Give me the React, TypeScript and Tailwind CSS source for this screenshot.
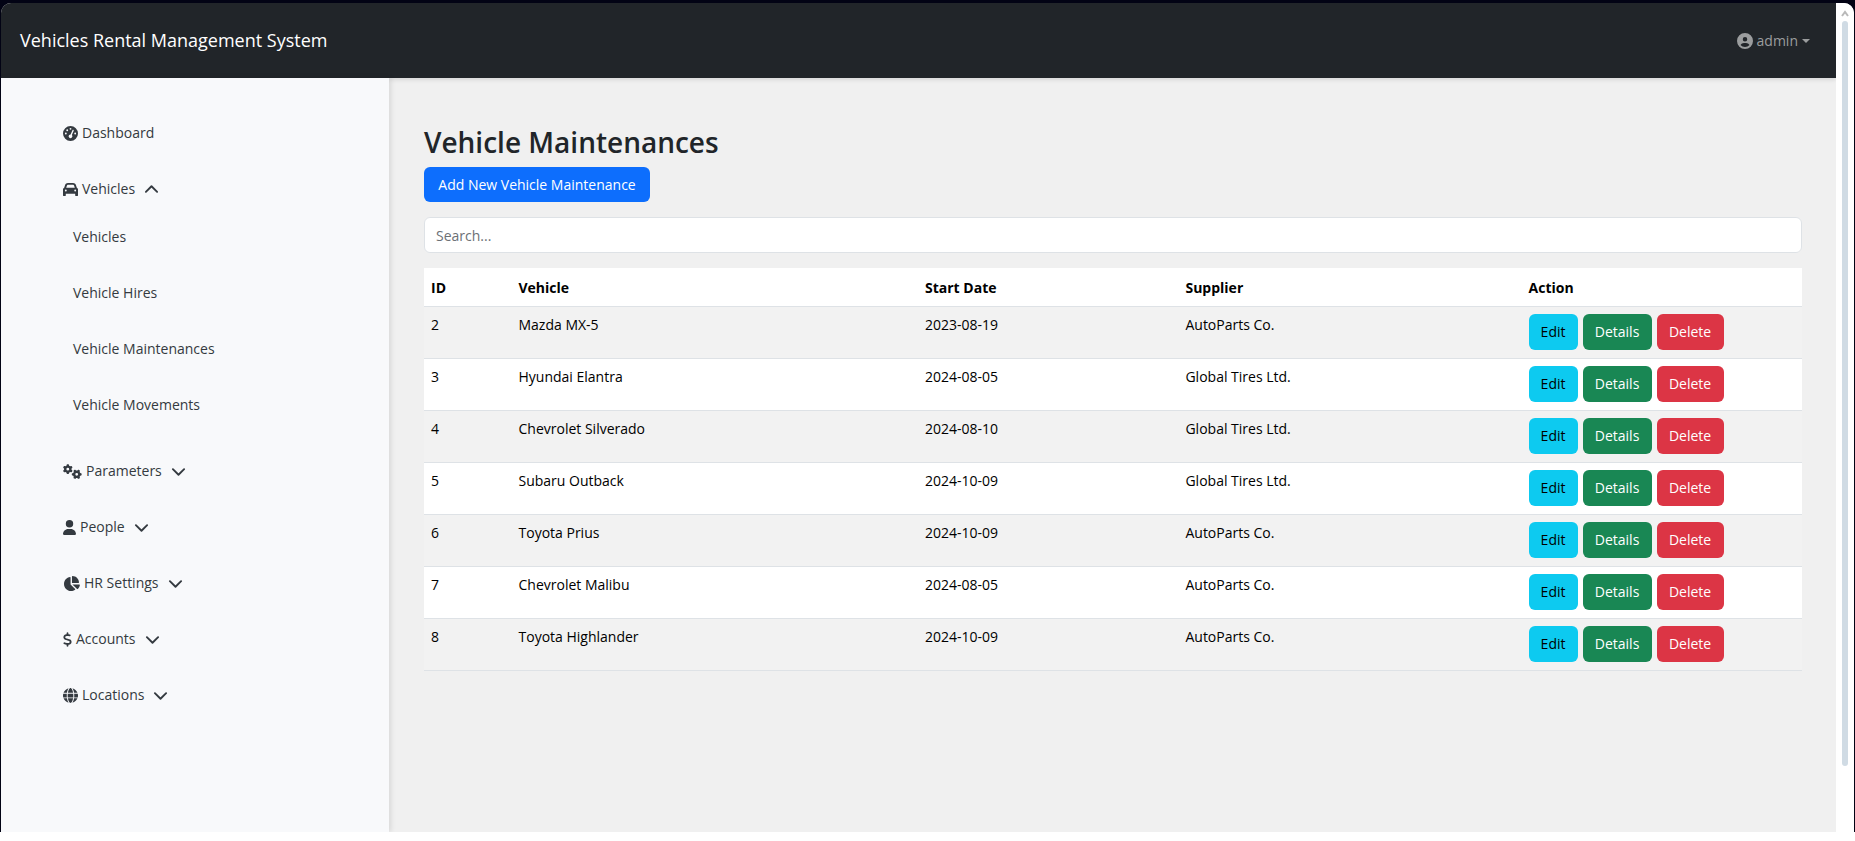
import { useState } from "react";
import type { ReactNode } from "react";
import {
  FaCar,
  FaChartPie,
  FaCircleUser,
  FaDollarSign,
  FaGaugeHigh,
  FaGears,
  FaGlobe,
  FaUser,
} from "react-icons/fa6";

type Maintenance = { id: number; vehicle: string; date: string; supplier: string };

const records: Maintenance[] = [
  { id: 2, vehicle: "Mazda MX-5", date: "2023-08-19", supplier: "AutoParts Co." },
  { id: 3, vehicle: "Hyundai Elantra", date: "2024-08-05", supplier: "Global Tires Ltd." },
  { id: 4, vehicle: "Chevrolet Silverado", date: "2024-08-10", supplier: "Global Tires Ltd." },
  { id: 5, vehicle: "Subaru Outback", date: "2024-10-09", supplier: "Global Tires Ltd." },
  { id: 6, vehicle: "Toyota Prius", date: "2024-10-09", supplier: "AutoParts Co." },
  { id: 7, vehicle: "Chevrolet Malibu", date: "2024-08-05", supplier: "AutoParts Co." },
  { id: 8, vehicle: "Toyota Highlander", date: "2024-10-09", supplier: "AutoParts Co." },
];

const vehicleLinks = ["Vehicles", "Vehicle Hires", "Vehicle Maintenances", "Vehicle Movements"];

function Chevron({ up = false }: { up?: boolean }) {
  return (
    <svg viewBox="0 0 16 16" className="ml-[5px] size-[15px] fill-none stroke-current stroke-2" aria-hidden="true">
      <path d={up ? "M2 10.5l6-6 6 6" : "M2 5.5l6 6 6-6"} strokeLinecap="round" strokeLinejoin="round" />
    </svg>
  );
}

function MenuButton({ icon, label, open = false }: { icon: ReactNode; label: string; open?: boolean }) {
  return (
    <button type="button" aria-expanded={open} className="flex h-14 items-center gap-1 pl-[62px] text-left">
      {icon}
      <span>{label}</span>
      <Chevron up={open} />
    </button>
  );
}

function Sidebar() {
  return (
    <nav className="z-10 flex w-[388px] shrink-0 flex-col bg-[#f8f9fb] pt-[27px] text-[#343a40] shadow-[2px_0_5px_rgba(0,0,0,0.1)]">
      <a href="#dashboard" className="flex h-14 items-center gap-1 pl-[62px]">
        <FaGaugeHigh className="size-[15px]" />
        Dashboard
      </a>
      <MenuButton icon={<FaCar className="size-[15px]" />} label="Vehicles" open />
      <ul className="-mt-2 mb-2.5">
        {vehicleLinks.map((label) => (
          <li key={label}>
            <a href="#vehicles" className="flex h-14 items-center pl-[72px]">
              {label}
            </a>
          </li>
        ))}
      </ul>
      <MenuButton icon={<FaGears className="h-[15px] w-[19px]" />} label="Parameters" />
      <MenuButton icon={<FaUser className="h-[15px] w-[13px]" />} label="People" />
      <MenuButton icon={<FaChartPie className="h-[15px] w-[17px]" />} label="HR Settings" />
      <MenuButton icon={<FaDollarSign className="h-[15px] w-[9px]" />} label="Accounts" />
      <MenuButton icon={<FaGlobe className="size-[15px]" />} label="Locations" />
    </nav>
  );
}

function MaintenanceTable({ rows }: { rows: Maintenance[] }) {
  return (
    <table className="w-full table-fixed border-separate border-spacing-0 text-left text-black">
      <colgroup>
        <col className="w-[6.35%]" />
        <col className="w-[29.5%]" />
        <col className="w-[18.9%]" />
        <col className="w-[24.9%]" />
        <col />
      </colgroup>
      <thead>
        <tr className="h-[39px] bg-white">
          {["ID", "Vehicle", "Start Date", "Supplier", "Action"].map((name) => (
            <th key={name} scope="col" className="border-b border-[#dee2e6] px-[7px] pt-px font-bold">
              {name}
            </th>
          ))}
        </tr>
      </thead>
      <tbody>
        {rows.map((row) => (
          <tr
            key={row.id}
            className="h-[52px] align-top odd:bg-[#f2f2f2] even:bg-white *:border-b *:border-[#dee2e6] *:px-[7px] *:pt-[7px]"
          >
            <td>{row.id}</td>
            <td>{row.vehicle}</td>
            <td>{row.date}</td>
            <td>{row.supplier}</td>
            <td>
              <div className="flex gap-[5px]">
                <button type="button" className="h-9 w-[49px] rounded-md bg-[#0dcaf0]">
                  Edit
                </button>
                <button type="button" className="h-9 w-[69px] rounded-md bg-[#198754] text-white">
                  Details
                </button>
                <button type="button" className="h-9 w-[67px] rounded-md bg-[#dc3545] text-white">
                  Delete
                </button>
              </div>
            </td>
          </tr>
        ))}
      </tbody>
    </table>
  );
}

function ScrollTrack() {
  return (
    <div className="flex w-[18px] shrink-0 flex-col items-center bg-white pt-1.5" aria-hidden="true">
      <svg viewBox="0 0 8 8" className="size-2 fill-none stroke-[#b9b9b9] stroke-2">
        <path d="M1 7l3-4 3 4" />
      </svg>
      <div className="mt-1 h-[90.5%] w-1.5 rounded-full bg-[#d0dbe4]" />
    </div>
  );
}

export default function App() {
  const [query, setQuery] = useState("");
  const rows = records.filter((r) => `${r.vehicle} ${r.supplier}`.toLowerCase().includes(query.toLowerCase()));

  return (
    <div className="h-screen bg-white pb-[9px] font-['Open_Sans',sans-serif] text-sm leading-[22px]">
      <div className="h-full bg-[#020314] pt-[3px] pr-px pl-px">
        <div className="flex h-full overflow-hidden rounded-t-[10px] bg-[#f0f0f0]">
          <div className="flex min-w-0 flex-1 flex-col">
            <header className="flex h-[75px] shrink-0 items-center justify-between bg-[#212529] pr-[26px] pl-[19px] shadow-[0_2px_4px_rgba(0,0,0,0.1)]">
              <a href="#home" className="pb-0.5 text-lg text-white">
                Vehicles Rental Management System
              </a>
              <button type="button" className="flex items-center gap-1 text-[#9b9d9e]">
                <FaCircleUser className="size-4" />
                <span>admin</span>
                <svg viewBox="0 0 8 4" className="h-1 w-2 fill-current" aria-hidden="true">
                  <path d="M0 0h8L4 4z" />
                </svg>
              </button>
            </header>
            <div className="flex min-h-0 flex-1">
              <Sidebar />
              <main className="min-w-0 flex-1 pt-12 pr-[34px] pl-[35px]">
                <h1 className="mb-2 text-[28px] leading-[33px] font-semibold text-[#212529]">
                  Vehicle Maintenances
                </h1>
                <button type="button" className="h-[35px] w-[226px] rounded-md bg-[#0d6efd] text-white">
                  Add New Vehicle Maintenance
                </button>
                <input
                  type="search"
                  aria-label="Search"
                  placeholder="Search..."
                  value={query}
                  onChange={(e) => setQuery(e.target.value)}
                  className="my-[15px] block h-9 w-full rounded-md border border-[#dee2e6] bg-white px-[11px] placeholder:text-[#6c7075]"
                />
                <MaintenanceTable rows={rows} />
              </main>
            </div>
          </div>
          <ScrollTrack />
        </div>
      </div>
    </div>
  );
}
